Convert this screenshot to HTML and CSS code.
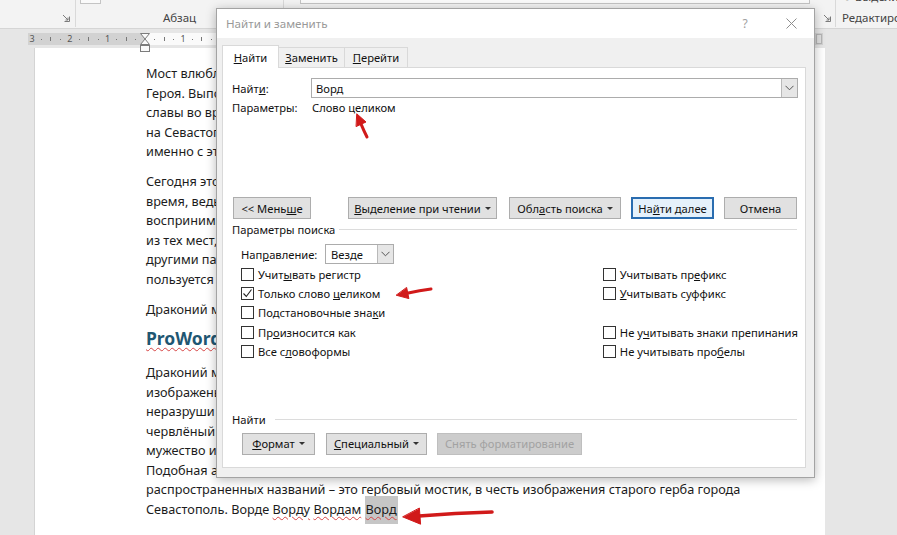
FILE: index.html
```html
<!DOCTYPE html>
<html lang="ru">
<head>
<meta charset="utf-8">
<title>Найти и заменить</title>
<link rel="stylesheet" href="styles.css">
</head>
<body>
<div class="app">
  <div class="ribbon">
    <div class="rgroup g1">
      <div class="rfoot"><svg class="launcher" width="8" height="8" viewBox="0 0 8 8"><path d="M7.5 2.5v5h-5" fill="none" stroke="#7a7a7a"/><path d="M1 1l5 5M6 3.5V6H3.5" fill="none" stroke="#7a7a7a"/></svg></div>
    </div>
    <div class="rgroup g2">
      <div class="rtop"><span class="ctrlbox small"></span></div>
      <div class="rfoot center"><span class="rlabel">Абзац</span></div>
    </div>
    <div class="rgroup g3">
      <div class="rtop"><span class="ctrlbox gallery"></span></div>
      <div class="rfoot"><span class="rlabel grow"></span><svg class="launcher" width="8" height="8" viewBox="0 0 8 8"><path d="M7.5 2.5v5h-5" fill="none" stroke="#7a7a7a"/><path d="M1 1l5 5M6 3.5V6H3.5" fill="none" stroke="#7a7a7a"/></svg></div>
    </div>
    <div class="rgroup g4">
      <div class="rtop"><span class="cut">↻ Выделить</span></div>
      <div class="rfoot"><span class="rlabel">Редактирование</span></div>
    </div>
  </div>

  <div class="ruler-row">
    <div class="ruler">
      <div class="scale">
        <span class="c n">3</span><span class="c"><i class="d"></i></span><span class="c"><i class="t"></i></span><span class="c"><i class="d"></i></span>
        <span class="c n">2</span><span class="c"><i class="d"></i></span><span class="c"><i class="t"></i></span><span class="c"><i class="d"></i></span>
        <span class="c n">1</span><span class="c"><i class="d"></i></span><span class="c"><i class="t"></i></span><span class="c"><i class="d"></i></span>
        <span class="c"></span><span class="c"><i class="d"></i></span><span class="c"><i class="t"></i></span><span class="c"><i class="d"></i></span>
        <span class="c n">1</span><span class="c"><i class="d"></i></span><span class="c"><i class="t"></i></span><span class="c"><i class="d"></i></span>
        <span class="c"></span><span class="c"><i class="d"></i></span><span class="c"><i class="t"></i></span><span class="c"><i class="d"></i></span>
      </div>
      <svg class="indent" width="12" height="19" viewBox="0 0 12 19"><path d="M1.5 0.5h9L6 6z M6 6l4.5 5.5h-9z" fill="#fafafa" stroke="#7c7c7c"/><rect x="1.5" y="12.5" width="9" height="6" fill="#fafafa" stroke="#7c7c7c"/></svg>
      <span class="rmark"></span>
    </div>
  </div>

  <div class="docarea">
    <div class="page">
      <p>
        <span class="ln">Мост влюблённых</span>
        <span class="ln">Героя. Выпо</span>
        <span class="ln">славы во вр</span>
        <span class="ln">на Севастоп</span>
        <span class="ln">именно с этого</span>
      </p>
      <p>
        <span class="ln">Сегодня это</span>
        <span class="ln">время, ведь</span>
        <span class="ln">воспринимался</span>
        <span class="ln">из тех мест, куда</span>
        <span class="ln">другими па</span>
        <span class="ln">пользуется</span>
      </p>
      <p class="p3"><span class="ln">Драконий мост</span></p>
      <h2 class="hd"><span class="sp">ProWord</span></h2>
      <p>
        <span class="ln">Драконий мост</span>
        <span class="ln">изображены</span>
        <span class="ln">неразруши</span>
        <span class="ln">червлёный</span>
        <span class="ln">мужество и</span>
        <span class="ln">Подобная ассоциация</span>
        <span class="ln">распространенных названий – это гербовый мостик, в честь изображения старого герба города</span>
        <span class="ln"><span>Севастополь. Ворде </span><span class="sp">Ворду</span><span> </span><span class="sp">Вордам</span><span> </span><span class="sel sp">Ворд</span></span>
      </p>
      <h2 class="hd"><span class="sp">ProWord</span></h2>
    </div>
  </div>

  <div class="dialog">
    <div class="titlebar">
      <span class="title">Найти и заменить</span>
      <span class="help">?</span>
      <span class="close"><svg width="11" height="11" viewBox="0 0 11 11"><path d="M0.5 0.5l10 10M10.5 0.5l-10 10" stroke="#8d8d8d" stroke-width="1"/></svg></span>
    </div>
    <div class="tabs">
      <div class="tab active"><span class="t"><u>Н</u><span>айти</span></span></div>
      <div class="tab t2"><span class="t"><u>З</u><span>аменить</span></span></div>
      <div class="tab t3"><span class="t"><u>П</u><span>ерейти</span></span></div>
    </div>
    <div class="panel">
      <div class="findrow">
        <span class="lbl"><span>Найт</span><u>и</u><span>:</span></span>
        <div class="combo">
          <span class="val">Ворд</span>
          <span class="dd"><svg width="9" height="6" viewBox="0 0 9 6"><path d="M0.5 0.8l4 4 4-4" fill="none" stroke="#555"/></svg></span>
        </div>
      </div>
      <div class="paramrow"><span class="lbl">Параметры:</span><span class="pval">Слово целиком</span></div>

      <div class="btnrow top">
        <span class="btn b1"><span class="t"><span>&lt;&lt; Мень</span><u>ш</u><span>е</span></span></span>
        <span class="btn b2"><span class="t"><u>В</u><span>ыделение при чтении</span></span><i class="tri"></i></span>
        <span class="btn b3"><span class="t"><span>Обл</span><u>а</u><span>сть поиска</span></span><i class="tri"></i></span>
        <span class="btn b4 default"><span class="t"><span>На</span><u>й</u><span>ти далее</span></span></span>
        <span class="btn b5">Отмена</span>
      </div>

      <div class="section"><span>Параметры поиска</span><span class="rule"></span></div>

      <div class="dirrow">
        <span class="dirlbl"><span>Нап</span><u>р</u><span>авление:</span></span>
        <div class="select"><span class="val">Везде</span><span class="dd"><svg width="9" height="6" viewBox="0 0 9 6"><path d="M0.5 0.8l4 4 4-4" fill="none" stroke="#555"/></svg></span></div>
      </div>

      <div class="checks">
        <div class="col left">
          <div class="chk"><span class="box"></span><span class="t"><span>Учит</span><u>ы</u><span>вать регистр</span></span></div>
          <div class="chk"><span class="box"><svg width="11" height="11" viewBox="0 0 11 11"><path d="M1.5 5.5l2.8 3 5.2-7" fill="none" stroke="#222" stroke-width="1.1"/></svg></span><span class="t"><span>Только слово </span><u>ц</u><span>еликом</span></span></div>
          <div class="chk"><span class="box"></span><span class="t"><span>Подстановочные зна</span><u>к</u><span>и</span></span></div>
          <div class="chk"><span class="box"></span><span class="t"><span>Пр</span><u>о</u><span>износится как</span></span></div>
          <div class="chk"><span class="box"></span><span class="t"><span>Все с</span><u>л</u><span>овоформы</span></span></div>
        </div>
        <div class="col right">
          <div class="chk"><span class="box"></span><span class="t"><span>Учитывать пр</span><u>е</u><span>фикс</span></span></div>
          <div class="chk"><span class="box"></span><span class="t"><u>У</u><span>читывать суффикс</span></span></div>
          <div class="chk empty"></div>
          <div class="chk"><span class="box"></span><span class="t"><span>Не у</span><u>ч</u><span>итывать знаки препинания</span></span></div>
          <div class="chk"><span class="box"></span><span class="t"><span>Не учитывать про</span><u>б</u><span>елы</span></span></div>
        </div>
      </div>

      <div class="section s2"><span>Найти</span><span class="rule"></span></div>

      <div class="btnrow bottom">
        <span class="btn f1"><span class="t"><u>Ф</u><span>ормат</span></span><i class="tri"></i></span>
        <span class="btn f2"><span class="t"><u>С</u><span>пециальный</span></span><i class="tri"></i></span>
        <span class="btn f3 disabled">Снять форматирование</span>
      </div>
    </div>
  </div>

  <svg class="arrows" width="897" height="535" viewBox="0 0 897 535">
    <g fill="#d11a1a" stroke="#d11a1a" stroke-linecap="round">
      <path d="M367 137 Q364 131 361.4 124.8" fill="none" stroke-width="3"/>
      <polygon points="357,114 366,122 356.4,126.4" stroke-width="1"/>
      <path d="M431 289 Q420 290.5 407 293.2" fill="none" stroke-width="3"/>
      <polygon points="396.5,295.3 408.9,298.6 406.7,287.8" stroke-width="1"/>
      <path d="M492 512 Q455 513 419 516" fill="none" stroke-width="3.6"/>
      <polygon points="403,517 420.6,524.2 419.4,508.4" stroke-width="1"/>
    </g>
  </svg>
</div>
</body>
</html>
```

FILE: styles.css
```css
* { box-sizing: border-box; }
html, body { margin: 0; padding: 0; }
body {
  width: 897px;
  height: 535px;
  overflow: hidden;
  background: #e6e6e6;
  font-family: "Noto Sans", "Open Sans", sans-serif;
}
.app {
  position: relative;
  width: 897px;
  height: 535px;
  overflow: hidden;
  display: flex;
  flex-direction: column;
}

/* ---------- ribbon ---------- */
.ribbon {
  height: 29px;
  flex: none;
  display: flex;
  background: #f3f3f3;
  border-bottom: 1px solid #d5d5d5;
  font-size: 11.5px;
  color: #444;
}
.rgroup {
  display: flex;
  flex-direction: column;
  height: 27px;
  border-right: 1px solid #d9d9d9;
  flex: none;
}
.g1 { width: 76px; }
.g2 { width: 208px; }
.g3 { width: 552px; }
.g4 { width: 120px; border-right: none; padding-left: 6px; }
.rtop { height: 4px; display: flex; overflow: visible; }
.rfoot {
  margin-top: auto;
  height: 18px;
  display: flex;
  align-items: center;
  white-space: nowrap;
}
.rfoot.center { justify-content: center; }
.g1 .rfoot { justify-content: flex-end; padding-right: 5px; }
.g3 .rfoot { padding-right: 4px; }
.rlabel { line-height: 14px; }
.rlabel.grow { flex: 1; }
.launcher { flex: none; }
.ctrlbox {
  display: block;
  height: 4px;
  border: 1px solid #c4c4c4;
  border-top: none;
  background: #fafafa;
}
.ctrlbox.small { width: 21px; margin-left: 4px; }
.ctrlbox.gallery { width: 510px; margin-left: 16px; }
.cut { font-size: 11.5px; line-height: 14px; margin-top: -10px; color: #444; }

/* ---------- ruler ---------- */
.ruler-row {
  height: 19px;
  flex: none;
  padding-top: 4px;
  background: #e6e6e6;
}
.ruler {
  position: relative;
  margin-left: 28px;
  width: 795px;
  height: 12px;
  background: linear-gradient(to right, #d2d2d2 0, #d2d2d2 117px, #fafafa 117px, #fafafa 786px, #d2d2d2 786px);
}
.scale { display: flex; margin-left: -0.7px; height: 12px; }
.c {
  width: 9.45px;
  flex: none;
  display: flex;
  align-items: center;
  justify-content: center;
  font-size: 9px;
  color: #555;
  line-height: 12px;
}
.c .d { display: block; width: 1px; height: 1px; background: #777; }
.c .t { display: block; width: 1px; height: 4px; background: #777; }
.indent { position: absolute; left: 111px; top: 0; }
.rmark {
  position: absolute;
  left: 788px;
  top: 1px;
  width: 6px;
  height: 10px;
  background: #e0e0e0;
  border: 1px solid #b5b5b5;
}

/* ---------- document ---------- */
.docarea {
  flex: 1;
  background: #e6e6e6;
  overflow: hidden;
}
.page {
  margin-left: 34px;
  width: 791px;
  height: 100%;
  background: #fff;
  border-left: 1px solid #d4d4d4;
  padding: 16px 0 0 111px;
  color: #1c1c1c;
  font-size: 12.7px;
  overflow: hidden;
}
.page p { margin: 0 0 10.5px; line-height: 19.5px; }
.page p.p3 { margin-bottom: 7px; }
.ln { display: block; white-space: pre; }
.hd {
  margin: 0 0 13px;
  font-size: 17.5px;
  line-height: 24px;
  font-weight: 700;
  color: #1f5773;
}
.sp {
  text-decoration: underline wavy #d64545;
  text-decoration-thickness: 1px;
  text-underline-offset: 2px;
}
.sel { background: #c6c6c6; padding: 4px 1px 6px; }

/* ---------- dialog ---------- */
.dialog {
  position: absolute;
  left: 216px;
  top: 8px;
  width: 599px;
  height: 470px;
  background: #f0f0f0;
  border: 1px solid #a3a3a3;
  box-shadow: 0 2px 10px rgba(0, 0, 0, 0.28);
  font-size: 11.2px;
  color: #111;
  display: flex;
  flex-direction: column;
}
.t { white-space: pre; }
.titlebar {
  height: 29px;
  flex: none;
  background: #fff;
  display: flex;
  align-items: center;
  padding: 0 13px 0 9px;
}
.title { flex: 1; color: #999; font-size: 11.6px; }
.help {
  width: 20px;
  text-align: center;
  color: #a0a0a0;
  font-size: 12px;
  margin-right: 26px;
}
.close { width: 20px; display: flex; justify-content: center; }

.tabs {
  margin-top: 7px;
  height: 22px;
  flex: none;
  display: flex;
  align-items: flex-end;
  padding-left: 5px;
}
.tab {
  position: relative;
  height: 20px;
  display: flex;
  align-items: center;
  justify-content: center;
  border: 1px solid #d9d9d9;
  border-bottom: none;
  background: #f0f0f0;
}
.tab.active {
  width: 57px;
  height: 23px;
  margin-bottom: -1px;
  background: #fff;
  z-index: 2;
}
.tab.t2 { width: 66px; border-left: none; }
.tab.t3 { width: 63px; border-left: none; }

.panel {
  flex: none;
  margin: 0 8px 0 5px;
  height: 401px;
  background: #fff;
  border: 1px solid #d9d9d9;
  padding: 0 7px 0 9px;
  display: flex;
  flex-direction: column;
}
.findrow {
  margin-top: 10px;
  height: 20px;
  display: flex;
  align-items: center;
}
.lbl { width: 79px; flex: none; }
.combo {
  width: 487px;
  height: 20px;
  border: 1px solid #acacac;
  display: flex;
  align-items: center;
}
.combo .val { flex: 1; padding-left: 4px; }
.dd {
  width: 16px;
  height: 18px;
  background: #e6e6e6;
  border-left: 1px solid #b9b9b9;
  display: flex;
  align-items: center;
  justify-content: center;
}
.paramrow {
  margin-top: 1px;
  height: 16px;
  display: flex;
  align-items: center;
}
.pval { padding-left: 1px; }

.btnrow { display: flex; height: 22px; }
.btnrow.top { margin-top: 82px; padding-left: 1px; }
.btn {
  height: 22px;
  display: flex;
  align-items: center;
  justify-content: center;
  background: #e1e1e1;
  border: 1px solid #adadad;
  white-space: nowrap;
}
.tri {
  display: inline-block;
  margin-left: 4px;
  width: 0;
  height: 0;
  border-left: 3px solid transparent;
  border-right: 3px solid transparent;
  border-top: 3px solid #333;
}
.b1 { width: 78px; }
.b2 { width: 149px; margin-left: 37px; }
.b3 { width: 112px; margin-left: 12px; }
.b4 { width: 83px; margin-left: 10px; }
.b5 { width: 73px; margin-left: 10px; }
.btn.default { background: #e5f1fb; border: 2px solid #2a6db0; }

.section {
  margin-top: 3px;
  height: 14px;
  display: flex;
  align-items: center;
  white-space: nowrap;
}
.section .rule {
  flex: 1;
  height: 1px;
  background: #dcdcdc;
  margin-left: 4px;
  margin-right: 1px;
}
.section.s2 { margin-top: 52px; }
.section.s2 .rule { margin-left: 9px; }

.dirrow {
  margin-top: 8px;
  height: 20px;
  display: flex;
  align-items: center;
  padding-left: 9px;
}
.dirlbl { width: 84px; flex: none; }
.select {
  width: 69px;
  height: 20px;
  border: 1px solid #acacac;
  display: flex;
  align-items: center;
}
.select .val { flex: 1; padding-left: 5px; }

.checks {
  margin-top: 1px;
  display: flex;
  padding-left: 9px;
}
.col.left { width: 362px; }
.chk {
  height: 19.2px;
  display: flex;
  align-items: center;
  white-space: nowrap;
}
.box {
  width: 13px;
  height: 13px;
  flex: none;
  border: 1px solid #333;
  background: #fff;
  margin-right: 4px;
  display: flex;
  align-items: center;
  justify-content: center;
}

.btnrow.bottom { margin-top: 6px; padding-left: 10px; }
.f1 { width: 73px; }
.f2 { width: 101px; margin-left: 11px; }
.f3 { width: 145px; margin-left: 10px; }
.btn.disabled { background: #cccccc; border-color: #bfbfbf; color: #a2a2a2; }

/* ---------- annotations ---------- */
.arrows { position: absolute; left: 0; top: 0; pointer-events: none; }
```
